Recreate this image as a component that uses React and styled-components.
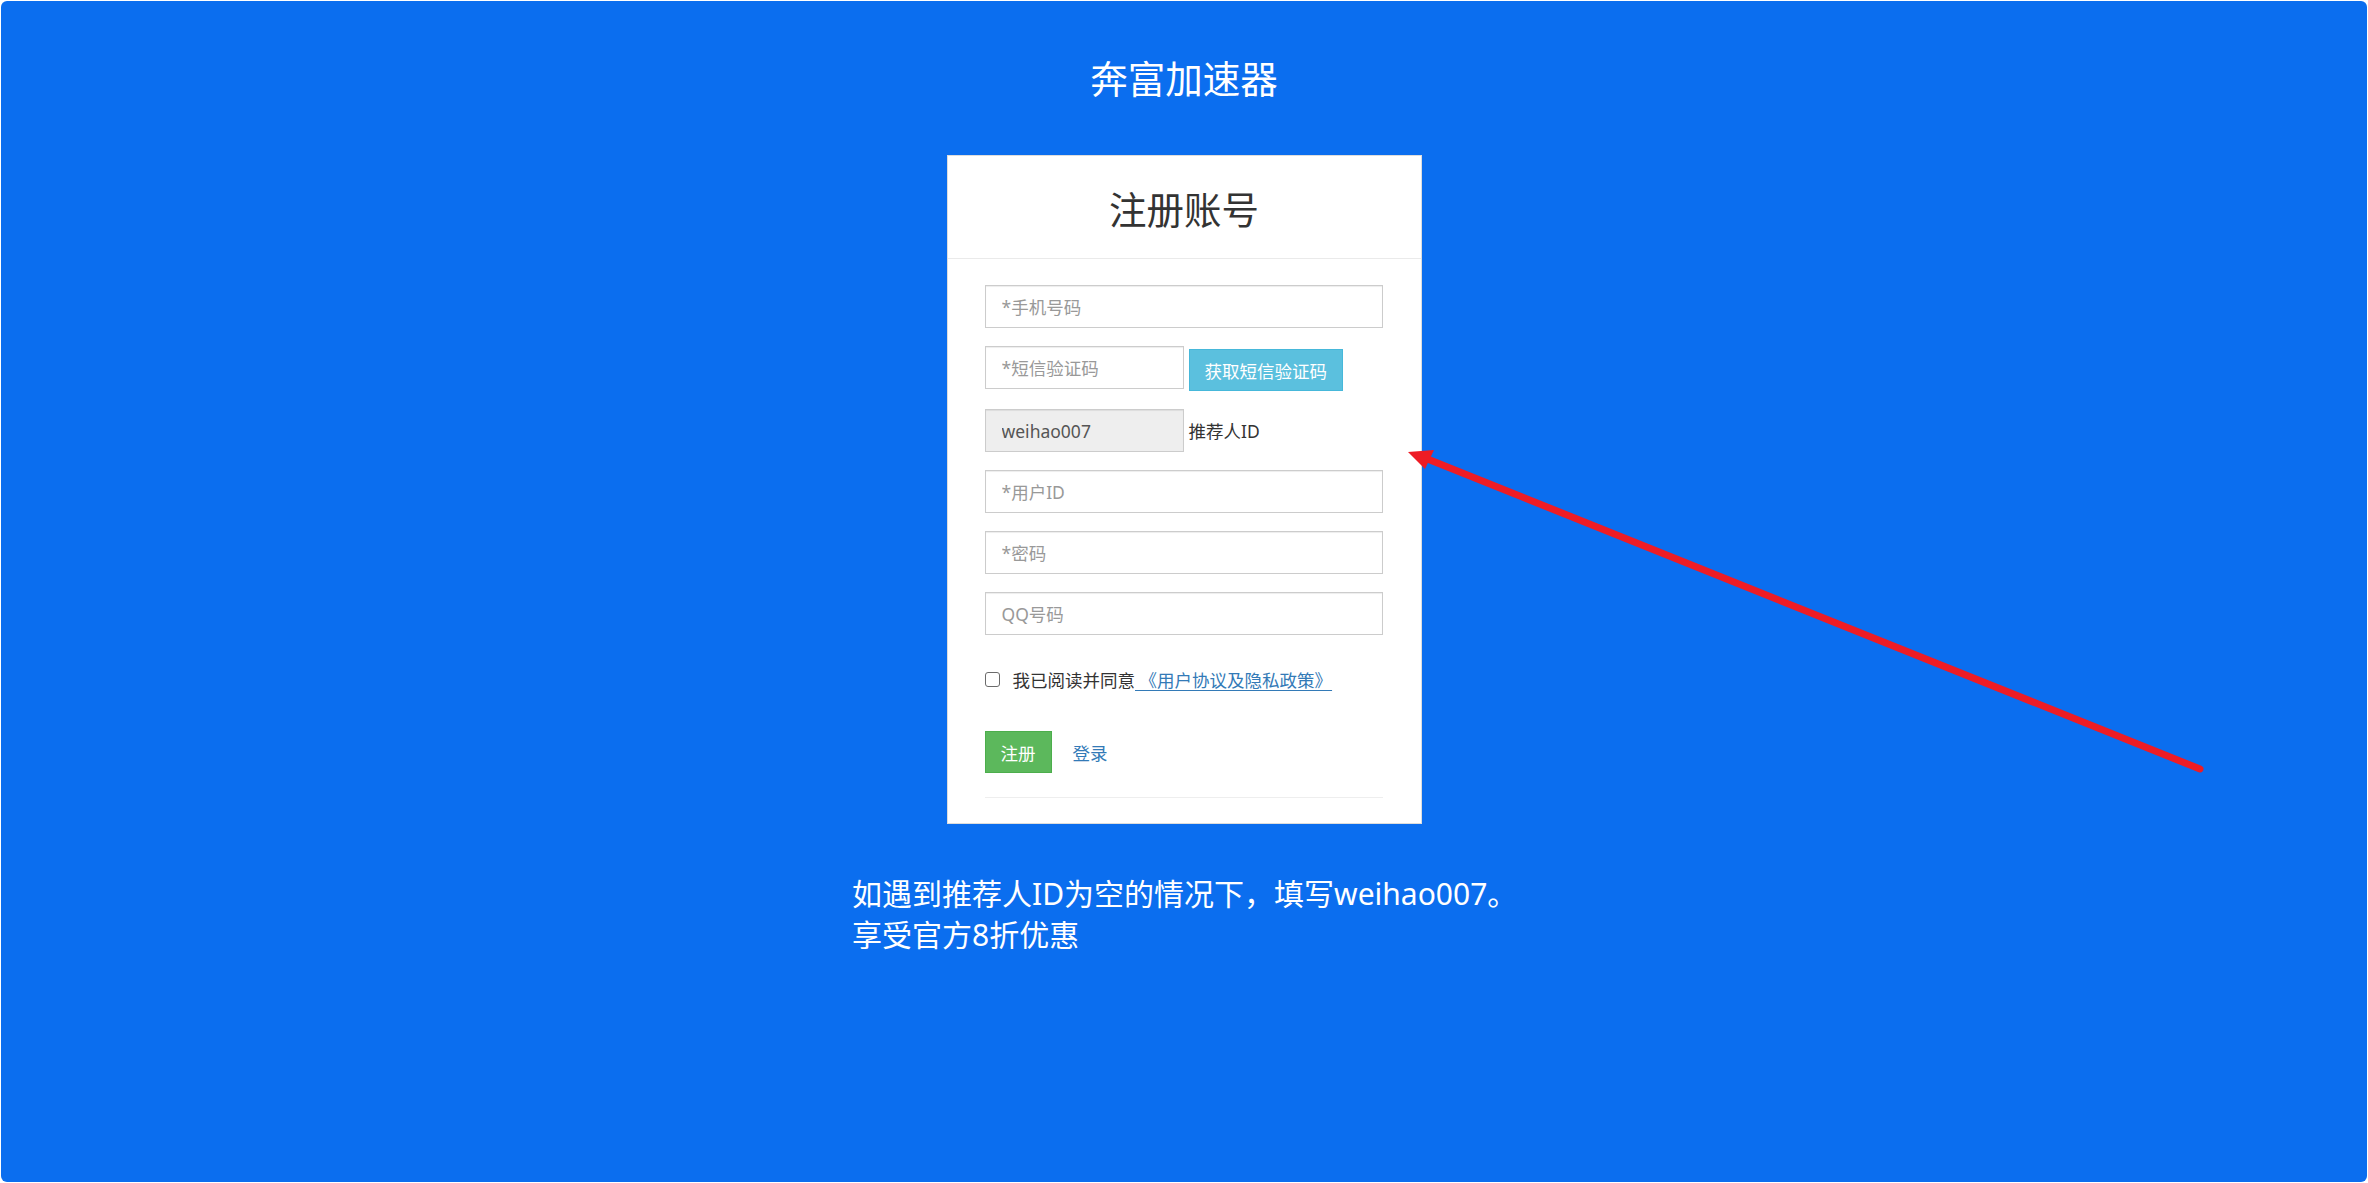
import React from "react";
import styled, { createGlobalStyle } from "styled-components";

const GlobalStyle = createGlobalStyle`
  html, body {
    margin: 0;
    padding: 0;
    background: #ffffff;
  }
  body {
    font-family: "Noto Sans", "Noto Sans CJK SC", sans-serif;
    color: #333333;
  }
  * { box-sizing: border-box; }
`;

const Panel = styled.div`
  position: relative;
  margin: 1px;
  height: 1181px;
  background: #0b6eef;
  border-radius: 6px;
  display: flex;
  flex-direction: column;
  overflow: hidden;
`;

const SiteTitle = styled.h1`
  margin: 57px 0 0;
  text-align: center;
  color: #ffffff;
  font-size: 37.5px;
  font-weight: 400;
  line-height: 41px;
`;

const Content = styled.main`
  margin-top: 56px;
  display: flex;
  flex-direction: column;
  align-items: center;
`;

const Card = styled.section`
  width: 475px;
  background: #ffffff;
  border: 1px solid #dddddd;
`;

const CardHeader = styled.header`
  height: 103px;
  padding-top: 6px;
  display: flex;
  align-items: center;
  justify-content: center;
  border-bottom: 1px solid #eaeaea;
`;

const CardTitle = styled.h2`
  margin: 0;
  font-size: 37.5px;
  font-weight: 400;
  line-height: 44px;
  color: #333333;
`;

const CardBody = styled.div`
  padding: 26px 37.5px 0 37px;
  display: flex;
  flex-direction: column;
  gap: 18px;
`;

const Row = styled.div`
  display: flex;
  align-items: ${(p) => (p.$align ? p.$align : "center")};
  gap: 5px;
`;

const Input = styled.input`
  display: block;
  width: ${(p) => (p.$half ? "199px" : "100%")};
  height: 43px;
  padding: 0 16px;
  font-family: inherit;
  font-size: 17.5px;
  color: #555555;
  background: ${(p) => (p.disabled ? "#eeeeee" : "#ffffff")};
  border: 1px solid #cccccc;
  border-radius: 0;
  box-shadow: inset 0 1px 1px rgba(0, 0, 0, 0.075);
  outline: none;
  &::placeholder {
    color: #999999;
  }
  &:disabled {
    color: #555555;
    -webkit-text-fill-color: #555555;
    opacity: 1;
  }
`;

const InfoButton = styled.button`
  margin-top: 3px;
  height: 42px;
  padding: 0 15px;
  font-family: inherit;
  font-size: 17.5px;
  color: #ffffff;
  background: #5bc0de;
  border: 1px solid #46b8da;
  border-radius: 0;
  white-space: nowrap;
`;

const FieldLabel = styled.span`
  font-size: 17.5px;
  color: #333333;
`;

const CheckRow = styled.label`
  margin-top: 14px;
  height: 24px;
  display: flex;
  align-items: center;
  font-size: 17.5px;
  color: #333333;
  white-space: pre;
`;

const CheckBox = styled.input`
  appearance: none;
  -webkit-appearance: none;
  margin: 0 13px 0 0;
  width: 15px;
  height: 15px;
  border: 1px solid #6b6b6b;
  border-radius: 3px;
  background: #ffffff;
`;

const PolicyLink = styled.a`
  color: #337ab7;
  text-decoration: underline;
  text-underline-offset: 3px;
  cursor: pointer;
`;

const Actions = styled.div`
  margin-top: 22px;
  display: flex;
  align-items: center;
  gap: 21px;
`;

const SuccessButton = styled.button`
  height: 42px;
  padding: 0 15px;
  font-family: inherit;
  font-size: 17.5px;
  color: #ffffff;
  background: #5cb85c;
  border: 1px solid #4cae4c;
  border-radius: 0;
`;

const TextLink = styled.a`
  font-size: 17.5px;
  color: #337ab7;
  text-decoration: none;
  cursor: pointer;
`;

const Divider = styled.hr`
  margin: 6px 0 25px;
  width: 100%;
  border: 0;
  border-top: 1px solid #eeeeee;
`;

const Notice = styled.p`
  margin: 49px 0 0;
  width: 664px;
  font-size: 30px;
  line-height: 41px;
  color: #ffffff;
  text-align: left;
  white-space: nowrap;
`;

const ArrowLayer = styled.svg`
  position: absolute;
  inset: 0;
  width: 100%;
  height: 100%;
  pointer-events: none;
`;

export default function App() {
  return (
    <>
      <GlobalStyle />
      <Panel>
        <SiteTitle>奔富加速器</SiteTitle>
        <Content>
          <Card>
            <CardHeader>
              <CardTitle>注册账号</CardTitle>
            </CardHeader>
            <CardBody>
              <Input placeholder="*手机号码" />
              <Row $align="flex-start">
                <Input $half placeholder="*短信验证码" />
                <InfoButton>获取短信验证码</InfoButton>
              </Row>
              <Row>
                <Input $half disabled value="weihao007" readOnly />
                <FieldLabel>推荐人ID</FieldLabel>
              </Row>
              <Input placeholder="*用户ID" />
              <Input type="password" placeholder="*密码" />
              <Input placeholder="QQ号码" />
              <CheckRow>
                <CheckBox type="checkbox" />
                我已阅读并同意
                <PolicyLink>{" 《用户协议及隐私政策》"}</PolicyLink>
              </CheckRow>
              <Actions>
                <SuccessButton>注册</SuccessButton>
                <TextLink>登录</TextLink>
              </Actions>
              <Divider />
            </CardBody>
          </Card>
          <Notice>
            如遇到推荐人ID为空的情况下，填写weihao007。
            <br />
            享受官方8折优惠
          </Notice>
        </Content>
        <ArrowLayer viewBox="0 0 2366 1181" preserveAspectRatio="none">
          <line
            x1="1424"
            y1="457"
            x2="2199"
            y2="768"
            stroke="#ee1c25"
            strokeWidth="7"
            strokeLinecap="round"
          />
          <polygon points="1407,451 1433,449 1424,468" fill="#ee1c25" />
        </ArrowLayer>
      </Panel>
    </>
  );
}
